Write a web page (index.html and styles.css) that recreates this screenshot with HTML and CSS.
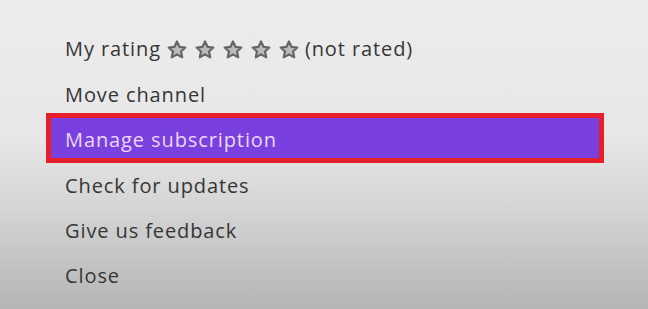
FILE: index.html
```html
<!DOCTYPE html>
<html>
<head>
<meta charset="utf-8">
<link rel="stylesheet" href="styles.css">
</head>
<body>
<ul class="menu">
  <li class="item rating">
    <span>My rating</span>
    <span class="stars">
      <svg class="star" viewBox="0 0 24 24"><path d="M12 1.8l3 6.4 7 .8-5.2 4.8 1.5 7L12 17.3l-6.3 3.5 1.5-7L2 9l7-.8z"/></svg>
      <svg class="star" viewBox="0 0 24 24"><path d="M12 1.8l3 6.4 7 .8-5.2 4.8 1.5 7L12 17.3l-6.3 3.5 1.5-7L2 9l7-.8z"/></svg>
      <svg class="star" viewBox="0 0 24 24"><path d="M12 1.8l3 6.4 7 .8-5.2 4.8 1.5 7L12 17.3l-6.3 3.5 1.5-7L2 9l7-.8z"/></svg>
      <svg class="star" viewBox="0 0 24 24"><path d="M12 1.8l3 6.4 7 .8-5.2 4.8 1.5 7L12 17.3l-6.3 3.5 1.5-7L2 9l7-.8z"/></svg>
      <svg class="star" viewBox="0 0 24 24"><path d="M12 1.8l3 6.4 7 .8-5.2 4.8 1.5 7L12 17.3l-6.3 3.5 1.5-7L2 9l7-.8z"/></svg>
    </span>
    <span>(not rated)</span>
  </li>
  <li class="item">Move channel</li>
  <li class="item selected">Manage subscription</li>
  <li class="item">Check for updates</li>
  <li class="item">Give us feedback</li>
  <li class="item">Close</li>
</ul>
</body>
</html>
```
FILE: styles.css
```css
html, body {
  margin: 0;
  padding: 0;
  width: 648px;
  height: 309px;
  overflow: hidden;
}
body {
  background: linear-gradient(180deg, #ececec 0%, #e7e7e7 45%, #d2d2d2 70%, #b5b5b5 100%);
  font-family: "Open Sans", "DejaVu Sans", sans-serif;
  color: #363636;
}
.menu {
  list-style: none;
  margin: 0;
  padding: 26.3px 44px 0 46px;
}
.item {
  height: 45.4px;
  display: flex;
  align-items: center;
  padding-left: 19px;
  font-size: 20px;
  letter-spacing: 0.9px;
  box-sizing: border-box;
}
.rating {
  gap: 6px;
}
.stars {
  display: flex;
  gap: 8px;
  margin-top: 2px;
}
.star {
  flex: 0 0 auto;
  width: 20px;
  height: 20px;
  fill: #bababa;
  stroke: #666666;
  stroke-width: 2.6;
  stroke-linejoin: round;
}
.selected {
  margin: 1px 5px 4.4px;
  height: 40px;
  padding-left: 14px;
  padding-top: 3px;
  background: #7a3fdf;
  outline: 5px solid #e61f2b;
  color: #ead8f6;
  font-weight: 500;
}
```
